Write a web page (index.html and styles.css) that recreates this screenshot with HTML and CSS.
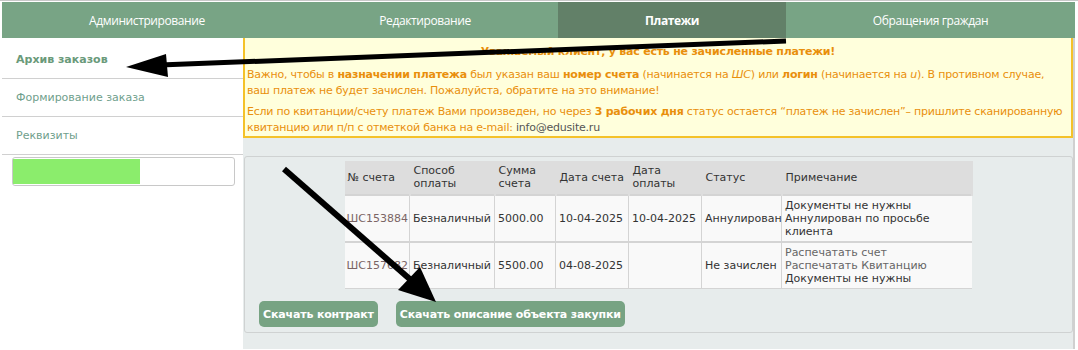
FILE: index.html
```html
<!DOCTYPE html>
<html lang="ru">
<head>
  <meta charset="UTF-8">
  <title>Платежи</title>
  <link rel="stylesheet" href="styles.css">
</head>
<body>
  <div class="page">
    <nav class="tabs">
      <a class="tab tab-admin" href="#">Администрирование</a>
      <a class="tab tab-edit" href="#">Редактирование</a>
      <a class="tab tab-pay active" href="#">Платежи</a>
      <a class="tab tab-req" href="#">Обращения граждан</a>
    </nav>

    <div class="layout">
      <aside class="sidebar">
        <a class="side-item current" href="#">Архив заказов</a>
        <a class="side-item" href="#">Формирование заказа</a>
        <a class="side-item" href="#">Реквизиты</a>
        <div class="progress"><div class="progress-fill" style="width: 57.5%"></div></div>
      </aside>

      <main class="main">
        <div class="notice">
          <div class="notice-title">Уважаемый клиент, у вас есть не зачисленные платежи!</div>
          <p>Важно, чтобы в <b>назначении платежа</b> был указан ваш <b>номер счета</b> (начинается на <i>ШС</i>) или <b>логин</b> (начинается на <i>u</i>). В противном случае, ваш платеж не будет зачислен. Пожалуйста, обратите на это внимание!</p>
          <p>Если по квитанции/счету платеж Вами произведен, но через <b>3 рабочих дня</b> статус остается “платеж не зачислен”– пришлите сканированную квитанцию или п/п с отметкой банка на e-mail: <span class="mail">info@edusite.ru</span></p>
        </div>

        <div class="panel">
          <table class="orders">
            <colgroup>
              <col style="width: 65px">
              <col style="width: 85px">
              <col style="width: 61px">
              <col style="width: 73px">
              <col style="width: 73px">
              <col style="width: 80px">
              <col style="width: 190px">
            </colgroup>
            <thead>
              <tr>
                <th>№ счета</th>
                <th>Способ оплаты</th>
                <th>Сумма счета</th>
                <th>Дата счета</th>
                <th>Дата оплаты</th>
                <th>Статус</th>
                <th>Примечание</th>
              </tr>
            </thead>
            <tbody>
              <tr>
                <td><a class="num" href="#">ШС153884</a></td>
                <td>Безналичный</td>
                <td>5000.00</td>
                <td>10-04-2025</td>
                <td>10-04-2025</td>
                <td>Аннулирован</td>
                <td>Документы не нужны<br>Аннулирован по просьбе клиента</td>
              </tr>
              <tr>
                <td><a class="num" href="#">ШС157682</a></td>
                <td>Безналичный</td>
                <td>5500.00</td>
                <td>04-08-2025</td>
                <td></td>
                <td>Не зачислен</td>
                <td><a class="print" href="#">Распечатать счет</a><br><a class="print" href="#">Распечатать Квитанцию</a><br>Документы не нужны</td>
              </tr>
            </tbody>
          </table>

          <div class="actions">
            <button class="btn">Скачать контракт</button>
            <button class="btn">Скачать описание объекта закупки</button>
          </div>
        </div>
      </main>
    </div>

    <!-- стрелки-пометки поверх скриншота -->
    <svg class="marks" width="1078" height="350" viewBox="0 0 1078 350">
      <line x1="786" y1="40" x2="160" y2="64" stroke="#000" stroke-width="5"/>
      <polygon points="126,66 166,53 168,76" fill="#000"/>
      <line x1="284" y1="168" x2="412" y2="280" stroke="#000" stroke-width="6"/>
      <polygon points="436,301 398,289 420,266" fill="#000"/>
    </svg>
  </div>
</body>
</html>
```

FILE: styles.css
```css
body {
  margin: 0;
  background-color: #fff;
  font-family: "DejaVu Sans", Verdana, sans-serif;
  font-size: 11px;
  color: #222;
}
.page {
  position: relative;
  width: 1078px;
  height: 350px;
  overflow: hidden;
  border-top: 1px solid #c8c8c8;
  box-sizing: border-box;
}
.tabs {
  display: flex;
  margin: 1px 3px 0 2px;
  height: 36px;
  background-color: #78a485;
}
.tab {
  display: flex;
  align-items: center;
  justify-content: center;
  color: #fff;
  text-decoration: none;
  font-family: "Open Sans", sans-serif;
  font-size: 12px;
  letter-spacing: -0.4px;
}
.tab-admin { width: 290px; }
.tab-edit { width: 266px; }
.tab-pay { width: 228px; }
.tab-req { flex: 1; }
.tab.active {
  background-color: #628068;
  font-weight: bold;
}
.layout {
  display: flex;
  height: 311px;
  margin-right: 3px;
}
.sidebar {
  width: 243px;
  flex-shrink: 0;
  padding-top: 3px;
  box-sizing: border-box;
}
.side-item {
  display: flex;
  align-items: center;
  height: 37px;
  margin-left: 2px;
  padding-left: 14px;
  border-bottom: 1px solid #d0d0d0;
  color: #6fa08c;
  text-decoration: none;
}
.side-item.current {
  font-weight: bold;
  color: #6a9a7a;
}
.progress {
  margin: 2px 8px 0 12px;
  height: 25px;
  border: 1px solid #c8c8c8;
  border-radius: 3px;
  padding: 1px 0;
  background: #fff;
}
.progress-fill {
  height: 100%;
  background-color: #8bed6c;
}
.main {
  flex: 1;
  background-color: #e7ecec;
  border-right: 2px solid #d0d0d0;
}
.notice {
  background-color: #ffffdc;
  border: 2px solid #f4c22a;
  border-top: 0;
  padding: 6px 2px 0 2px;
  color: #e98f0c;
  line-height: 16px;
  letter-spacing: -0.22px;
}
.notice-title {
  text-align: center;
  font-weight: bold;
  margin-bottom: 7px;
}
.notice p {
  margin: 0 0 5px 0;
}
.notice p:last-child {
  margin-bottom: 0;
}
.notice .mail {
  color: #555;
}
.panel {
  margin: 18px 0 0 1px;
  border: 1px solid #cfd2d2;
  border-radius: 3px;
  padding: 4px 0 5px 0;
  height: 177px;
  box-sizing: border-box;
}
.orders {
  margin: 0 auto;
  width: 627px;
  border-collapse: collapse;
  table-layout: fixed;
  line-height: 13px;
  color: #333;
}
.orders th {
  background-color: #dddddd;
  font-weight: normal;
  text-align: left;
  padding: 3px 3px 4px 3px;
  height: 26px;
  border-right: 2px solid #dddddd;
}
.orders td {
  background-color: #f9f9f9;
  border: 1px solid #d4d4d4;
  border-top: 2px solid #d4d4d4;
  padding: 3px 2px 3px 3px;
  vertical-align: middle;
}
.orders tr td:first-child {
  border-left: 0;
  padding-left: 2px;
}
.orders tr td:last-child {
  border-right: 0;
}
.orders a.num {
  color: #7b6565;
  text-decoration: none;
}
.orders a.print {
  color: #666;
  text-decoration: none;
}
.actions {
  display: flex;
  gap: 18px;
  padding: 12px 0 0 14px;
}
.btn {
  background-color: #77a383;
  color: #fff;
  border: none;
  border-radius: 5px;
  font-family: "DejaVu Sans", Verdana, sans-serif;
  font-size: 11px;
  font-weight: bold;
  letter-spacing: -0.15px;
  height: 26px;
  padding: 0 4px;
}
.marks {
  position: absolute;
  top: 0;
  left: 0;
  pointer-events: none;
}
```
